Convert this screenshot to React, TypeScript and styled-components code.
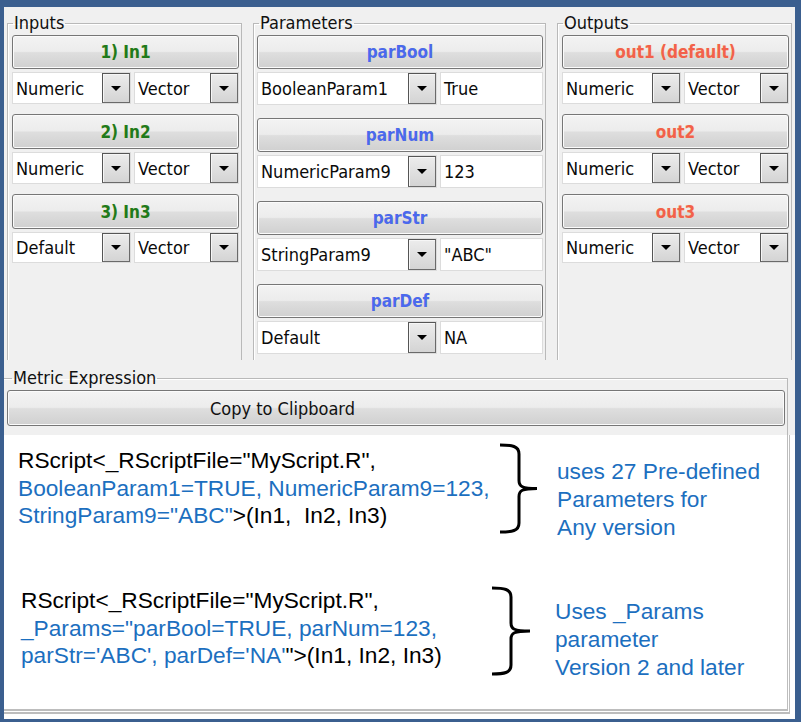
import React from "react";
import styled, { createGlobalStyle } from "styled-components";

const GlobalStyle = createGlobalStyle`
  html, body { margin: 0; padding: 0; background: #3b5f8f; }
  body { font-family: "DejaVu Sans Condensed", "Liberation Sans", sans-serif; }
  * { box-sizing: border-box; }
`;

const UI_FONT = `"DejaVu Sans Condensed", "Liberation Sans", sans-serif`;
const DOC_FONT = `"Liberation Sans", Arial, sans-serif`;

const Frame = styled.div`
  width: 801px;
  height: 722px;
  padding: 7px 6px 3px 4px;
  background: #3b5f8f;
  display: flex;
  flex-direction: column;
`;

const Dialog = styled.div`
  height: 428px;
  flex: none;
  background: #f0f0f0;
  display: flex;
  flex-direction: column;
`;

const Columns = styled.div`
  display: flex;
  gap: 11px;
  padding: 5px 0 0 3px;
  height: 353px;
`;

const Group = styled.fieldset<{ $w: number }>`
  width: ${(p) => p.$w}px;
  margin: 0;
  padding: 0 2px 0 0;
  min-inline-size: 0;
  border: 1px solid #b9b9b9;
  border-bottom: none;
  box-shadow: inset 1px 1px 0 #ffffff;
  height: 348px;
  font-family: ${UI_FONT};
`;

const Legend = styled.legend`
  margin-left: 5px;
  padding: 0 1px;
  font-size: 18px;
  line-height: 22px;
  color: #111;
`;

const Stack = styled.div<{ $gap: number; $pl: number }>`
  display: flex;
  flex-direction: column;
  gap: ${(p) => p.$gap}px;
  padding-left: ${(p) => p.$pl}px;
  margin-top: 1px;
`;

const Item = styled.div`
  display: flex;
  flex-direction: column;
  gap: 3px;
`;

const TitleButton = styled.div<{ $color: string; $h: number }>`
  height: ${(p) => p.$h}px;
  border: 1px solid #767676;
  border-radius: 3px;
  box-shadow: inset 0 0 0 1px #fbfbfb;
  background: linear-gradient(#f3f3f3 0%, #ececec 48%, #dedede 52%, #d0d0d0 100%);
  display: flex;
  align-items: center;
  justify-content: center;
  font-family: ${UI_FONT};
  font-weight: bold;
  font-size: 17px;
  color: ${(p) => p.$color};
  text-shadow: 0 0 1px rgba(255, 230, 150, 0.6);
`;

const Row = styled.div<{ $h: number }>`
  display: flex;
  gap: 3px;
  height: ${(p) => p.$h}px;
`;

const Combo = styled.div<{ $w?: number }>`
  display: flex;
  ${(p) => (p.$w ? `width: ${p.$w}px; flex: none;` : `flex: 1;`)}
  background: #ffffff;
  border: 1px solid #dcdcdc;
`;

const FieldText = styled.div`
  flex: 1;
  display: flex;
  align-items: center;
  padding-left: 3px;
  font-family: ${UI_FONT};
  font-size: 18px;
  color: #0a0a0a;
  white-space: nowrap;
  overflow: hidden;
`;

const DropButton = styled.div`
  width: 28px;
  flex: none;
  border: 1px solid #6a6a6a;
  border-top-color: #555;
  border-left-color: #555;
  box-shadow: inset 1px 1px 0 #f6f6f6;
  background: linear-gradient(#ececec, #d4d4d4);
  display: flex;
  align-items: center;
  justify-content: center;
  &::after {
    content: "";
    border-left: 5px solid transparent;
    border-right: 5px solid transparent;
    border-top: 5px solid #000;
  }
`;

const MetricGroup = styled.fieldset`
  margin: 7px 0 0 0;
  padding: 0 2px 0 3px;
  width: 784px;
  min-inline-size: 0;
  border: 1px solid #b9b9b9;
  border-left: none;
  border-bottom: none;
  box-shadow: inset 0 1px 0 #ffffff;
  font-family: ${UI_FONT};
  flex: 1;
`;

const CopyButton = styled.div`
  margin-top: 1px;
  height: 36px;
  border: 1px solid #767676;
  border-radius: 3px;
  box-shadow: inset 0 0 0 1px #fbfbfb;
  background: linear-gradient(#f3f3f3 0%, #ececec 48%, #dedede 52%, #d0d0d0 100%);
  display: flex;
  align-items: center;
  padding-left: 202px;
  font-family: ${UI_FONT};
  font-size: 18px;
  color: #111;
`;

const WhiteArea = styled.div`
  flex: 1;
  background: #ffffff;
  display: flex;
  flex-direction: column;
  padding-bottom: 5px;
`;

const Sheet = styled.div`
  flex: 1;
  margin-right: 5px;
  border-right: 3px double #bdbdbd;
  border-bottom: 5px double #bdbdbd;
  padding-top: 8px;
  display: flex;
  flex-direction: column;
`;

const Example = styled.div<{ $pl: number; $mt: number }>`
  display: flex;
  align-items: flex-start;
  padding-left: ${(p) => p.$pl}px;
  margin-top: ${(p) => p.$mt}px;
`;

const Code = styled.div<{ $w: number; $mt: number }>`
  width: ${(p) => p.$w}px;
  flex: none;
  margin-top: ${(p) => p.$mt}px;
  font-family: ${DOC_FONT};
  font-size: 22.7px;
  line-height: 27.5px;
  color: #000;
  white-space: pre;
`;

const Blue = styled.span`
  color: #1c6fbf;
`;

const Note = styled.div<{ $ml: number; $mt: number }>`
  margin-left: ${(p) => p.$ml}px;
  margin-top: ${(p) => p.$mt}px;
  font-family: ${DOC_FONT};
  font-size: 22.7px;
  line-height: 28px;
  color: #1c6fbf;
  white-space: pre;
`;

const Brace = ({ w, h }: { w: number; h: number }) => {
  const m = h / 2;
  const x = 19;
  return (
    <svg width={w} height={h} viewBox={`0 0 ${w} ${h}`} style={{ flex: "none" }}>
      <path
        d={`M0,2 C12,2 ${x},3 ${x},11 V${m - 8} C${x},${m - 2} ${x + 3},${m} ${w - 1},${m}
            M${w - 1},${m} C${x + 3},${m} ${x},${m + 2} ${x},${m + 8} V${h - 11} C${x},${h - 3} 12,${h - 2} 0,${h - 2}`}
        fill="none"
        stroke="#000"
        strokeWidth={3}
      />
    </svg>
  );
};

type ComboSpec = { text: string; w?: number };

const InputItem = ({
  title,
  color,
  combos,
  btnH,
  rowH,
}: {
  title: string;
  color: string;
  combos: ComboSpec[];
  btnH: number;
  rowH: number;
}) => (
  <Item>
    <TitleButton $color={color} $h={btnH}>
      {title}
    </TitleButton>
    <Row $h={rowH}>
      {combos.map((c, i) => (
        <Combo key={i} $w={c.w}>
          <FieldText>{c.text}</FieldText>
          <DropButton />
        </Combo>
      ))}
    </Row>
  </Item>
);

const ParamItem = ({ title, name, value }: { title: string; name: string; value: string }) => (
  <Item>
    <TitleButton $color="#4a69ee" $h={34}>
      {title}
    </TitleButton>
    <Row $h={33}>
      <Combo $w={180}>
        <FieldText>{name}</FieldText>
        <DropButton />
      </Combo>
      <Combo>
        <FieldText>{value}</FieldText>
      </Combo>
    </Row>
  </Item>
);

const GREEN = "#1f7a1c";
const RED = "#f2614b";

export default function App() {
  return (
    <>
      <GlobalStyle />
      <Frame>
        <Dialog>
          <Columns>
            <Group $w={235}>
              <Legend>Inputs</Legend>
              <Stack $gap={10} $pl={4}>
                <InputItem title="1) In1" color={GREEN} btnH={34} rowH={32} combos={[{ text: "Numeric", w: 119 }, { text: "Vector" }]} />
                <InputItem title="2) In2" color={GREEN} btnH={35} rowH={32} combos={[{ text: "Numeric", w: 119 }, { text: "Vector" }]} />
                <InputItem title="3) In3" color={GREEN} btnH={35} rowH={31} combos={[{ text: "Default", w: 119 }, { text: "Vector" }]} />
              </Stack>
            </Group>
            <Group $w={293}>
              <Legend>Parameters</Legend>
              <Stack $gap={13} $pl={3}>
                <ParamItem title="parBool" name="BooleanParam1" value="True" />
                <ParamItem title="parNum" name="NumericParam9" value="123" />
                <ParamItem title="parStr" name="StringParam9" value={'"ABC"'} />
                <ParamItem title="parDef" name="Default" value="NA" />
              </Stack>
            </Group>
            <Group $w={235}>
              <Legend>Outputs</Legend>
              <Stack $gap={10} $pl={4}>
                <InputItem title="out1 (default)" color={RED} btnH={34} rowH={32} combos={[{ text: "Numeric", w: 119 }, { text: "Vector" }]} />
                <InputItem title="out2" color={RED} btnH={35} rowH={32} combos={[{ text: "Numeric", w: 119 }, { text: "Vector" }]} />
                <InputItem title="out3" color={RED} btnH={35} rowH={31} combos={[{ text: "Numeric", w: 119 }, { text: "Vector" }]} />
              </Stack>
            </Group>
          </Columns>
          <MetricGroup>
            <Legend>Metric Expression</Legend>
            <CopyButton>Copy to Clipboard</CopyButton>
          </MetricGroup>
        </Dialog>
        <WhiteArea>
          <Sheet>
            <Example $pl={14} $mt={0}>
              <Code $w={482} $mt={4}>
                <div>RScript&lt;_RScriptFile="MyScript.R",</div>
                <div>
                  <Blue>BooleanParam1=TRUE, NumericParam9=123,</Blue>
                </div>
                <div>
                  <Blue>StringParam9="ABC"</Blue>&gt;(In1,  In2, In3)
                </div>
              </Code>
              <Brace w={38} h={91} />
              <Note $ml={19} $mt={14}>
                <div>uses 27 Pre-defined</div>
                <div>Parameters for</div>
                <div>Any version</div>
              </Note>
            </Example>
            <Example $pl={17} $mt={45}>
              <Code $w={471} $mt={1}>
                <div>RScript&lt;_RScriptFile="MyScript.R",</div>
                <div>
                  <Blue>_Params="parBool=TRUE, parNum=123,</Blue>
                </div>
                <div>
                  <Blue>parStr='ABC', parDef='NA'</Blue>"&gt;(In1, In2, In3)
                </div>
              </Code>
              <Brace w={39} h={90} />
              <Note $ml={24} $mt={11}>
                <div>Uses _Params</div>
                <div>parameter</div>
                <div>Version 2 and later</div>
              </Note>
            </Example>
          </Sheet>
        </WhiteArea>
      </Frame>
    </>
  );
}
